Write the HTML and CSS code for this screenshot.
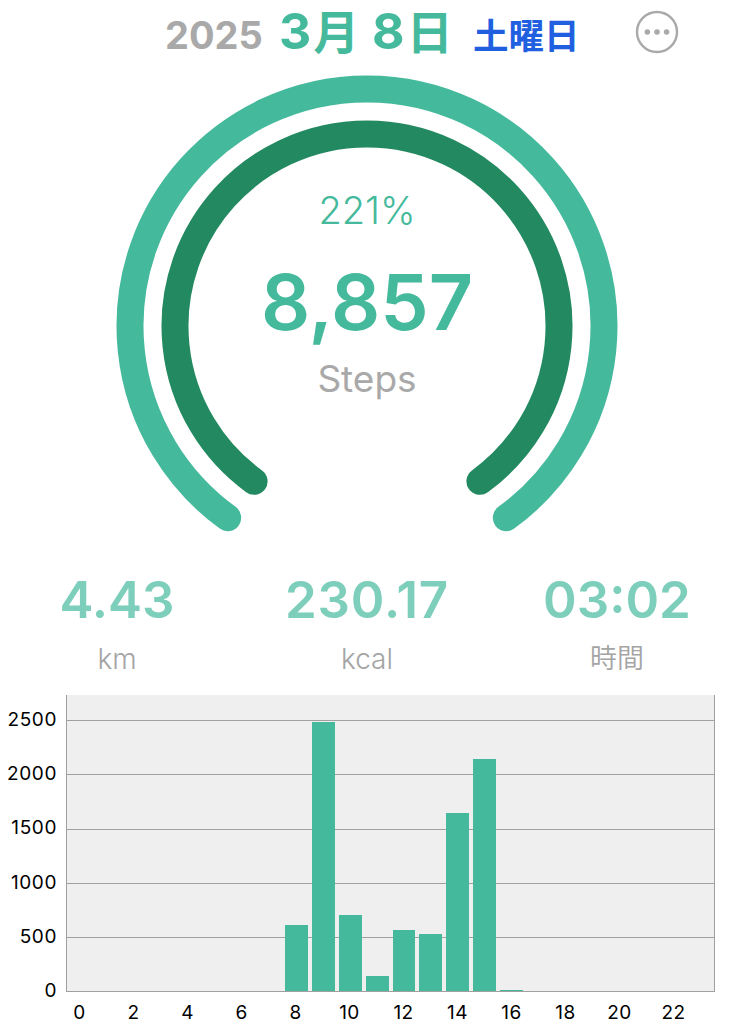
FILE: index.html
```html
<!DOCTYPE html>
<html lang="ja">
<head>
  <meta charset="UTF-8">
  <title>Steps</title>
  <link rel="stylesheet" href="styles.css">
</head>
<body>
  <header class="header">
    <span class="year">2025</span>
    <span class="date">3<span class="kanji">月</span> 8<span class="kanji">日</span></span>
    <span class="weekday">土曜日</span>
    <svg class="menu" width="44" height="44" viewBox="0 0 44 44">
      <circle cx="22" cy="22" r="20" fill="none" stroke="#a9a9a9" stroke-width="2.4"/>
      <circle cx="12.4" cy="22" r="2.8" fill="#a9a9a9"/>
      <circle cx="22" cy="22" r="2.8" fill="#a9a9a9"/>
      <circle cx="31.6" cy="22" r="2.8" fill="#a9a9a9"/>
    </svg>
  </header>

  <main class="gauge">
    <svg class="rings" width="502" height="460" viewBox="0 0 502 460">
      <path d="M111.7 442.7 A237 237 0 1 1 390.3 442.7" stroke="#45b99c"/>
      <path d="M138.1 406.3 A192 192 0 1 1 363.9 406.3" stroke="#238960"/>
    </svg>
    <div class="readout">
      <div class="percent">221%</div>
      <div class="steps">8,857</div>
      <div class="caption">Steps</div>
    </div>
  </main>

  <section class="stats">
    <div class="stat"><div class="value">4.43</div><div class="unit">km</div></div>
    <div class="stat"><div class="value wide">230.17</div><div class="unit">kcal</div></div>
    <div class="stat"><div class="value">03:02</div><div class="unit kanji">時間</div></div>
  </section>

  <section class="chart">
    <div class="y-axis">
      <span>2500</span><span>2000</span><span>1500</span><span>1000</span><span>500</span><span>0</span>
    </div>
    <div class="plot">
      <div class="lines"><i></i><i></i><i></i><i></i><i></i></div>
      <!-- one bar per hour, 0 to 23 -->
      <div class="bars">
        <b></b><b></b><b></b><b></b><b></b><b></b><b></b><b></b>
        <b style="height: 66px"></b>
        <b style="height: 269px"></b>
        <b style="height: 76px"></b>
        <b style="height: 15px"></b>
        <b style="height: 61px"></b>
        <b style="height: 57px"></b>
        <b style="height: 178px"></b>
        <b style="height: 232px"></b>
        <b style="height: 1px"></b>
        <b></b><b></b><b></b><b></b><b></b><b></b><b></b>
      </div>
    </div>
    <div class="x-axis">
      <span>0</span><span>2</span><span>4</span><span>6</span><span>8</span><span>10</span>
      <span>12</span><span>14</span><span>16</span><span>18</span><span>20</span><span>22</span>
    </div>
  </section>
</body>
</html>
```
FILE: styles.css
```css
*, *:before, *:after {
  box-sizing: border-box;
}

body {
  width: 735px;
  height: 1024px;
  margin: 0;
  overflow: hidden;
  background: #fff;
  font-family: Inter, "Noto Sans CJK JP", sans-serif;
}

/* header */
.header {
  display: flex;
  align-items: baseline;
  height: 75px;
  padding-left: 165px;
  white-space: nowrap;
}

.year {
  width: 114px;
  font-size: 38px;
  font-weight: 700;
  color: #a9a9a9;
}

.date {
  width: 194px;
  font-size: 50px;
  font-weight: 700;
  line-height: 62px;
  color: #45b99c;
}

.date .kanji {
  margin: 0 1px 0 2px;
  font-size: 46px;
  line-height: 1;
}

.weekday {
  width: 160px;
  font-size: 35.5px;
  font-weight: 700;
  color: #2060e0;
}

.menu {
  align-self: flex-start;
  margin-top: 10px;
  margin-left: 2px;
}

/* gauge */
.gauge {
  display: grid;
  justify-content: center;
  height: 495px;
  padding-right: 1px;
}

.rings,
.readout {
  grid-area: 1 / 1;
}

.rings path {
  fill: none;
  stroke-width: 27;
  stroke-linecap: round;
}

.readout {
  padding-top: 111px;
  text-align: center;
  color: #45b99c;
}

.percent {
  font-size: 38px;
  font-weight: 350;
  line-height: 48px;
}

.steps {
  margin-top: 22px;
  font-size: 77px;
  font-weight: 580;
  line-height: 92px;
}

.caption {
  margin-top: 7px;
  font-size: 37px;
  line-height: 48px;
  color: #a9a9a9;
}

/* stats */
.stats {
  display: grid;
  grid-template-columns: repeat(3, 250px);
  justify-content: center;
  height: 125px;
  padding-right: 1px;
  text-align: center;
}

.value {
  font-size: 51px;
  font-weight: 580;
  line-height: 60px;
  color: #7dcebb;
}

.value.wide {
  letter-spacing: 0.8px;
}

.unit {
  margin-top: 10px;
  font-size: 28px;
  font-weight: 300;
  line-height: 38px;
  color: #a4a4a4;
}

.unit.kanji {
  font-size: 27px;
  font-weight: 350;
}

/* hourly chart */
.chart {
  display: grid;
  grid-template-columns: 66px 649px;
  grid-template-rows: 297px 32px;
  font-size: 19px;
  line-height: 20px;
  color: #000;
}

.y-axis {
  display: flex;
  flex-direction: column;
  justify-content: space-between;
  padding: 15px 9px 0 0;
  margin-bottom: -9px;
  text-align: right;
  letter-spacing: 0.6px;
}

.plot {
  display: grid;
  background: #efefef;
  border: 1.5px solid #a0a0a0;
  border-top: 0;
}

.lines,
.bars {
  grid-area: 1 / 1;
}

.lines {
  padding-top: 25px;
}

.lines i {
  display: block;
  height: 54.25px;
  border-top: 1px solid #a0a0a0;
}

.bars {
  display: grid;
  grid-template-columns: repeat(24, 1fr);
  align-items: end;
}

.bars b {
  margin: 0 2px;
  background: #45b99c;
}

.x-axis {
  grid-column: 2;
  display: grid;
  grid-template-columns: repeat(12, 54px);
  padding-top: 11px;
}

.x-axis span {
  width: 27px;
  text-align: center;
  letter-spacing: 0.4px;
}
```
